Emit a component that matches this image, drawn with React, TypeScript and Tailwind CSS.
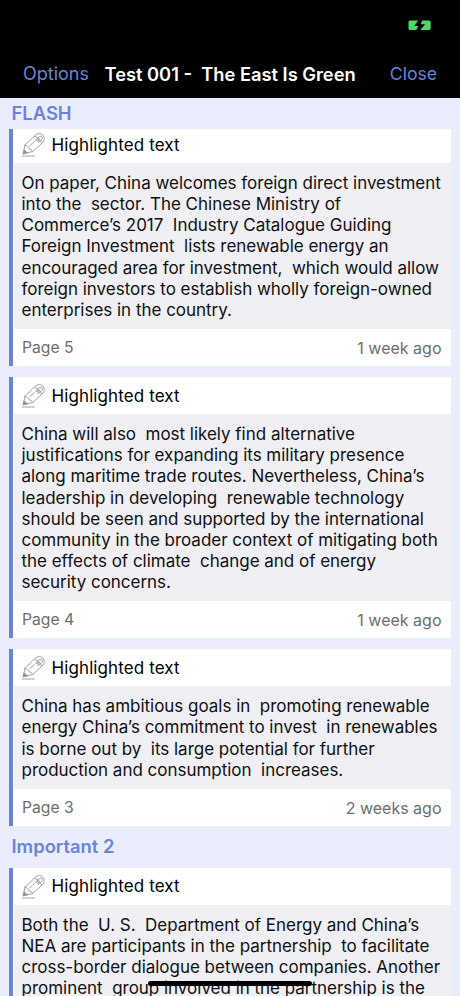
import React from 'react'

type Note = {
    lines: string[]
    page: number
    date: string
}

type Section = {
    title: string
    notes: Note[]
}

const sections: Section[] = [
    {
        title: 'FLASH',
        notes: [
            {
                lines: [
                    'On paper, China welcomes foreign direct investment',
                    'into the  sector. The Chinese Ministry of',
                    'Commerce’s 2017  Industry Catalogue Guiding',
                    'Foreign Investment  lists renewable energy an',
                    'encouraged area for investment,  which would allow',
                    'foreign investors to establish wholly foreign-owned',
                    'enterprises in the country.',
                ],
                page: 5,
                date: '1 week ago',
            },
            {
                lines: [
                    'China will also  most likely find alternative',
                    'justifications for expanding its military presence',
                    'along maritime trade routes. Nevertheless, China’s',
                    'leadership in developing  renewable technology',
                    'should be seen and supported by the international',
                    'community in the broader context of mitigating both',
                    'the effects of climate  change and of energy',
                    'security concerns.',
                ],
                page: 4,
                date: '1 week ago',
            },
            {
                lines: [
                    'China has ambitious goals in  promoting renewable',
                    'energy China’s commitment to invest  in renewables',
                    'is borne out by  its large potential for further',
                    'production and consumption  increases.',
                ],
                page: 3,
                date: '2 weeks ago',
            },
        ],
    },
    {
        title: 'Important 2',
        notes: [
            {
                lines: [
                    'Both the  U. S.  Department of Energy and China’s',
                    'NEA are participants in the partnership  to facilitate',
                    'cross-border dialogue between companies. Another',
                    'prominent  group involved in the partnership is the',
                ],
                page: 2,
                date: '2 weeks ago',
            },
        ],
    },
]

const HighlighterIcon = () => (
    <svg className="h-6 w-[23px] shrink-0" viewBox="0 0 23 24" fill="none" stroke="#999" strokeWidth="0.9" strokeLinejoin="round" strokeLinecap="round">
        {/* barrel and rounded cap */}
        <path d="M3 12.2 13.2 2.4Q17.6-1.2 20.8 2.1 24 5.6 20.6 9.6L10.6 18.6" />
        {/* tip */}
        <path d="M3 12.2 1.2 20.6 10.6 18.6Q9.8 15.9 7 15.6 6.3 12.8 3 12.2Z" />
        <path d="M1.2 20.6 2 16.8 5.2 19.7Z" fill="#8e8e8e" />
        {/* clip */}
        <path d="M12.8 3.2Q18 4.8 19.6 9.7" />
        <path d="m13.8 7.1 3.7-3.5q1.4-1 2.5.1 1 1.3-.1 2.6l-3.6 3.2" />
        <path d="m14.2 7.5 2.4-.9-.4 2.6" />
        <path d="m7.6 13 4.8-4.6" />
        <path d="M.5 23h12" />
    </svg>
)

const BatteryIcon = () => (
    <svg className="absolute top-5 left-[408px] h-[11px] w-[23px]" viewBox="0 0 23 11" fill="#4cd964">
        <path d="M2 .5h8.2L6.2 6h4L8.4 10H2Q.5 10 .5 8.5V2Q.5.5 2 .5Z" />
        <path d="M14.2.5H21Q22.7.5 22.7 2v6.5Q22.7 10 21 10h-8.7L17.2 4.2h-4.5Z" />
    </svg>
)

const NoteCard = ({ note }: { note: Note }) => (
    <div className="mr-[9.5px] ml-[9px] border-l-4 border-[#6b82d9] bg-white">
        <div className="flex h-[37px] items-center pt-px pl-[9px]">
            <HighlighterIcon />
            <span className="mt-px ml-[6.5px] text-[17px] tracking-[0.1px] text-black">Highlighted text</span>
        </div>
        <div className="ml-px bg-[#efeff4] pt-[10.2px] pb-2 pl-[7.5px] text-[17px] leading-[21.1px] tracking-[-0.02px] text-[#101012]">
            {note.lines.map((line) => (
                <p key={line} className="whitespace-pre">{line}</p>
            ))}
        </div>
        <div className="flex h-[37px] items-center justify-between pt-px pr-[9px] pl-[9px] text-[#6d6d70]">
            <span className="text-[15.7px]">Page {note.page}</span>
            <span className="text-[16px]">{note.date}</span>
        </div>
    </div>
)

const App = () => {
    return (
        <div className="relative flex h-[996px] w-[460px] flex-col overflow-hidden bg-[#e9edfc] font-['Inter',sans-serif]">
            <header className="relative z-20 h-[98px] shrink-0 bg-black">
                <BatteryIcon />
                <div className="flex items-center pt-[61px] pr-[23px] pl-[23px] text-[18px] leading-[26px] whitespace-pre text-[#6b82d9]">
                    <button className="w-[81.5px] text-left">Options</button>
                    <h1 className="text-[18.3px] font-semibold text-white">Test 001 -  The East Is Green</h1>
                    <button className="ml-auto text-[17.6px]">Close</button>
                </div>
            </header>

            <main>
                {sections.map((section, index) => (
                    <section key={section.title}>
                        <h2 className={`relative z-10 bg-[#e9edfc] pl-[11.5px] text-[18.4px] font-semibold text-[#6b82d9] ${index === 0 ? '-mb-[3px] h-[31px] leading-[31px]' : 'h-[42px] leading-[41px]'}`}>
                            {section.title}
                        </h2>
                        <div className="flex flex-col gap-[11.2px]">
                            {section.notes.map((note) => (
                                <NoteCard key={note.lines[0]} note={note} />
                            ))}
                        </div>
                    </section>
                ))}
            </main>

            <div className="absolute bottom-[10px] left-[148px] z-30 h-[5px] w-[164px] rounded-full bg-black" />
        </div>
    )
}

export default App
